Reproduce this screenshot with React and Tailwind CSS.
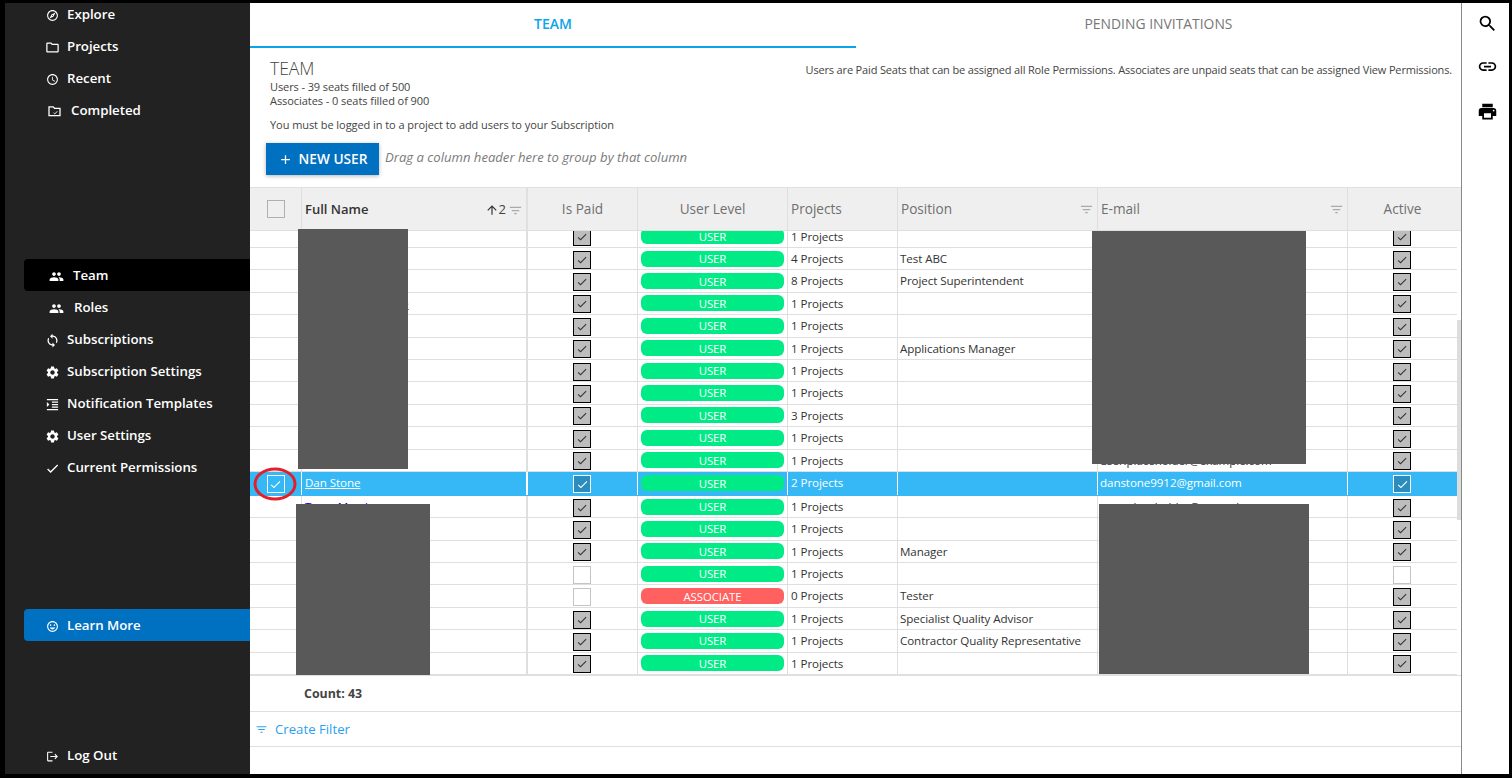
import React from "react";
import {
  MdOutlineExplore, MdOutlineFolder, MdOutlineSchedule, MdPeople, MdSync, MdSettings,
  MdFormatIndentIncrease, MdCheck, MdTagFaces, MdLogout, MdSearch, MdLink, MdPrint,
  MdFilterList, MdAdd, MdArrowUpward,
} from "react-icons/md";

const FolderCheck = ({ className }) => (
  <svg viewBox="0 0 14 12" className={className} fill="none" stroke="currentColor">
    <path d="M1 2.5V10.5H13V2.5H7L5.5 1H1Z" strokeWidth="1.4" />
    <path d="M6 7.5L7.3 8.7L10 5.8" strokeWidth="1" />
  </svg>
);

function Nav({ icon: Icon, label, pad = "pl-[22px]", gap = "gap-[8px]", tone = "", iconSize = "w-[13px] h-[13px]" }) {
  return (
    <div className={`h-[32px] pt-[2px] flex items-center rounded-l-[4px] ${pad} ${gap} ${tone}`}>
      <Icon className={`${iconSize} shrink-0 text-white`} />
      <span className="text-[13.3px] font-semibold text-white tracking-[-0.03px]">{label}</span>
    </div>
  );
}

function Box({ state = "on" }) {
  if (state === "head") return <div className="w-[18px] h-[18px] border border-[#b0b0b0]" />;
  if (state === "off") return <div className="mt-[2px] w-[18px] h-[18px] border border-[#c4c4c4] bg-white" />;
  if (state === "sel")
    return (
      <div className="mt-[2px] w-[18px] h-[18px] border border-white bg-[#2b8cbe] flex items-center justify-center">
        <MdCheck className="w-[13px] h-[13px] text-white" />
      </div>
    );
  if (state === "pick")
    return (
      <div className="mt-[2px] w-[18px] h-[18px] border border-white flex items-center justify-center">
        <MdCheck className="w-[13px] h-[13px] text-white" />
      </div>
    );
  return (
    <div className="mt-[2px] w-[18px] h-[18px] border border-black bg-[#bdbdbd] flex items-center justify-center">
      <MdCheck className="w-[12px] h-[12px] text-[#333]" />
    </div>
  );
}

const rows = [
  { p: 1 },
  { p: 4, pos: "Test ABC" },
  { p: 8, pos: "Project Superintendent" },
  { p: 1, name: "Team Member One" },
  { p: 1 },
  { p: 1, pos: "Applications Manager" },
  { p: 1 },
  { p: 1 },
  { p: 3 },
  { p: 1 },
  { p: 1, mail: "user.placeholder@example.com" },
  { p: 2, name: "Dan Stone", mail: "danstone9912@gmail.com", sel: true },
  { p: 1, name: "Team Member", mail: "user.placeholder@example" },
  { p: 1 },
  { p: 1, pos: "Manager" },
  { p: 1, unpaid: true, inactive: true },
  { p: 0, pos: "Tester", unpaid: true, assoc: true },
  { p: 1, pos: "Specialist Quality Advisor" },
  { p: 1, pos: "Contractor Quality Representative" },
  { p: 1 },
];

function Row({ r }) {
  const line = r.sel ? "border-white" : "border-[#dfdfdf]";
  const text = r.sel ? "text-white" : "text-[#333]";
  const textFix = r.sel ? "pb-[1px]" : "";
  return (
    <div
      className={`flex w-[1207px] border-b ${r.sel ? "h-[24px] bg-[#35b8f5] border-[#35b8f5]" : "h-[22.4px] border-[#dfdfdf]"} ${text} text-[11.6px] tracking-[-0.08px]`}
    >
      <div className={`w-[52px] border-r ${line} flex items-center justify-center`}>
        {r.sel ? <Box state="pick" /> : null}
      </div>
      <div className={`w-[226px] border-r-2 ${line} pl-[3px] flex items-center ${textFix}`}>
        {r.name ? (
          <a className={`underline ${r.sel ? "text-white" : "text-[#0000ee]"}`}>{r.name}</a>
        ) : null}
      </div>
      <div className={`w-[110px] border-r ${line} pr-[1px] flex items-center justify-center`}>
        <Box state={r.sel ? "sel" : r.unpaid ? "off" : "on"} />
      </div>
      <div className={`w-[150px] border-r ${line} flex items-center pl-[3px]`}>
        <div
          className={`w-[143px] h-[16px] rounded-[6px] flex items-center justify-center text-white text-[11.4px] ${r.assoc ? "bg-[#ff6060]" : "bg-[#00eb85]"}`}
        >
          {r.assoc ? "ASSOCIATE" : "USER"}
        </div>
      </div>
      <div className={`w-[110px] border-r ${line} pl-[3px] flex items-center ${textFix}`}>{r.p} Projects</div>
      <div className={`w-[200px] border-r ${line} pl-[2px] flex items-center ${textFix}`}>{r.pos}</div>
      <div className={`w-[250px] border-r ${line} pl-[2px] flex items-center ${textFix}`}>{r.mail}</div>
      <div className="w-[109px] pr-[1px] flex items-center justify-center">
        <Box state={r.sel ? "sel" : r.inactive ? "off" : "on"} />
      </div>
    </div>
  );
}

function Head({ w, children, center, dark, last }) {
  return (
    <div
      className={`${w} h-full ${dark ? "pt-[2px]" : "pt-[1px]"} ${last ? "" : "border-r border-[#dfdfdf]"} flex items-center ${center ? "justify-center" : "pl-[3px] pr-[3px]"} ${dark ? "text-[13px] font-semibold text-[#333]" : "text-[13.6px] font-medium text-[#707070]"}`}
    >
      {children}
    </div>
  );
}

export default function App() {
  return (
    <div
      className="relative w-[1512px] h-[778px] bg-black overflow-hidden flex pl-[5px] pr-[3px] pt-[3px] pb-[4px]"
      style={{ fontFamily: '"Open Sans", "Noto Sans", sans-serif' }}
    >
      {/* Sidebar */}
      <aside className="w-[245px] h-full bg-[#222222] pl-[19px] flex flex-col overflow-hidden shrink-0">
        <div className="-mt-[5px]">
          <Nav icon={MdOutlineExplore} label="Explore" />
          <Nav icon={MdOutlineFolder} label="Projects" pad="pl-[21px]" gap="gap-[7px]" iconSize="w-[15px] h-[15px]" />
          <Nav icon={MdOutlineSchedule} label="Recent" />
          <Nav icon={FolderCheck} label="Completed" pad="pl-[24px]" gap="gap-[10px]" iconSize="w-[13px] h-[11px]" />
        </div>
        <div className="mt-[133px]">
          <Nav icon={MdPeople} label="Team" pad="pl-[25px]" gap="gap-[9px]" tone="bg-black" iconSize="w-[15px] h-[15px]" />
          <Nav icon={MdPeople} label="Roles" pad="pl-[25px]" gap="gap-[10px]" iconSize="w-[15px] h-[15px]" />
          <Nav icon={MdSync} label="Subscriptions" pad="pl-[21px]" gap="gap-[7px]" iconSize="w-[15px] h-[15px]" />
          <Nav icon={MdSettings} label="Subscription Settings" pad="pl-[21px]" gap="gap-[7px]" iconSize="w-[15px] h-[15px]" />
          <Nav icon={MdFormatIndentIncrease} label="Notification Templates" pad="pl-[21px]" gap="gap-[7px]" iconSize="w-[15px] h-[15px]" />
          <Nav icon={MdSettings} label="User Settings" pad="pl-[21px]" gap="gap-[7px]" iconSize="w-[15px] h-[15px]" />
          <Nav icon={MdCheck} label="Current Permissions" pad="pl-[21px]" gap="gap-[7px]" iconSize="w-[15px] h-[15px]" />
        </div>
        <div className="mt-[126px]">
          <Nav icon={MdTagFaces} label="Learn More" tone="bg-[#0070c0]" />
        </div>
        <div className="mt-auto mb-[3px]">
          <Nav icon={MdLogout} label="Log Out" />
        </div>
      </aside>

      {/* Main */}
      <main className="w-[1211px] h-full bg-white flex flex-col shrink-0">
        <div className="h-[45px] flex shrink-0">
          <div className="w-[606px] pb-[2px] border-b-2 border-[#0aa5e8] flex items-center justify-center text-[14px] font-semibold text-[#0aa5e8]">
            TEAM
          </div>
          <div className="flex-1 pb-[2px] flex items-center justify-center text-[13.9px] font-medium text-[#777]">
            PENDING INVITATIONS
          </div>
        </div>

        <section className="h-[139px] shrink-0 pt-[9px] pl-[20px] pr-[9px]">
          <div className="flex justify-between">
            <div>
              <div className="text-[17.5px] leading-[22px] font-light text-[#444]">TEAM</div>
              <div className="text-[11px] leading-[14px] mt-[1px] text-[#444] tracking-[-0.1px]">Users - 39 seats filled of 500</div>
              <div className="text-[11px] leading-[14px] text-[#444] tracking-[-0.06px]">Associates - 0 seats filled of 900</div>
            </div>
            <div className="text-[11px] leading-[14px] text-[#444] mt-[6px] tracking-[-0.16px]">
              Users are Paid Seats that can be assigned all Role Permissions. Associates are unpaid seats that can be assigned View Permissions.
            </div>
          </div>
          <div className="text-[11px] leading-[14px] mt-[10px] text-[#444] tracking-[-0.06px]">
            You must be logged in to a project to add users to your Subscription
          </div>
          <div className="flex items-center mt-[11px] -ml-[4px]">
            <button className="w-[113px] h-[32px] bg-[#0070c0] text-white text-[13.7px] font-semibold flex items-center justify-center gap-[6px] shadow-[0_1px_4px_rgba(0,0,0,0.3)]">
              <MdAdd className="w-[15px] h-[15px]" />
              NEW USER
            </button>
            <span className="ml-[6px] -mt-[2px] text-[13.1px] italic font-medium text-[#7a7a7a]">
              Drag a column header here to group by that column
            </span>
          </div>
        </section>

        {/* Grid header */}
        <div className="h-[44px] shrink-0 bg-[#efefef] border-y border-[#dfdfdf] flex">
          <div className="w-[52px] h-full border-r border-[#dfdfdf] flex items-center justify-center">
            <Box state="head" />
          </div>
          <Head w="w-[226px] border-r-2" dark>
            <span className="flex-1">Full Name</span>
            <MdArrowUpward className="w-[14px] h-[14px] text-[#333]" />
            <span className="text-[#444] font-normal mr-[2px]">2</span>
            <MdFilterList className="w-[15px] h-[15px] text-[#aaa]" />
          </Head>
          <Head w="w-[110px]" center>Is Paid</Head>
          <Head w="w-[150px]" center>User Level</Head>
          <Head w="w-[110px]">Projects</Head>
          <Head w="w-[200px] pl-[2px]">
            <span className="flex-1">Position</span>
            <MdFilterList className="w-[15px] h-[15px] text-[#aaa]" />
          </Head>
          <Head w="w-[250px]">
            <span className="flex-1">E-mail</span>
            <MdFilterList className="w-[15px] h-[15px] text-[#aaa]" />
          </Head>
          <Head w="flex-1 pr-[4px]" center last>Active</Head>
        </div>

        {/* Grid body */}
        <div className="h-[444px] shrink-0 overflow-hidden relative">
          <div className="-mt-[5.4px]">
            {rows.map((r, i) => (
              <Row key={i} r={r} />
            ))}
          </div>
          <div className="absolute right-0 top-[89px] w-[4px] h-[200px] bg-[#dddddd]" />
        </div>

        <div className="h-[37px] shrink-0 pt-[2px] border-y border-[#dfdfdf] pl-[54px] flex items-center text-[12.4px] font-bold text-[#444]">
          Count: 43
        </div>
        <div className="h-[35px] shrink-0 pt-[1px] border-b border-[#dfdfdf] pl-[5px] flex items-center gap-[7px] text-[13.2px] text-[#2b9fef]">
          <MdFilterList className="w-[13px] h-[13px]" />
          Create Filter
        </div>
      </main>

      {/* Right rail */}
      <div className="flex-1 h-full bg-white border-l border-[#888] flex flex-col items-center pl-[3px] pt-[10px] gap-[22px]">
        <MdSearch className="w-[21px] h-[21px] text-black" />
        <MdLink className="w-[21px] h-[21px] text-black" />
        <MdPrint className="w-[21px] h-[21px] mt-[2px] text-black" />
      </div>

      {/* Redactions over the grid */}
      <div className="absolute left-[298px] top-[229px] w-[110px] h-[240px] bg-[#595959]" />
      <div className="absolute left-[296px] top-[504px] w-[134px] h-[171px] bg-[#595959]" />
      <div className="absolute left-[1092px] top-[231px] w-[214px] h-[233px] bg-[#595959]" />
      <div className="absolute left-[1099px] top-[504px] w-[210px] h-[170px] bg-[#595959]" />

      {/* Hand-drawn annotation */}
      <svg className="absolute left-[253px] top-[467px] w-[44px] h-[34px]" viewBox="0 0 44 34" fill="none">
        <ellipse cx="22" cy="17" rx="20" ry="15" stroke="#e3202a" strokeWidth="3" />
      </svg>
    </div>
  );
}
